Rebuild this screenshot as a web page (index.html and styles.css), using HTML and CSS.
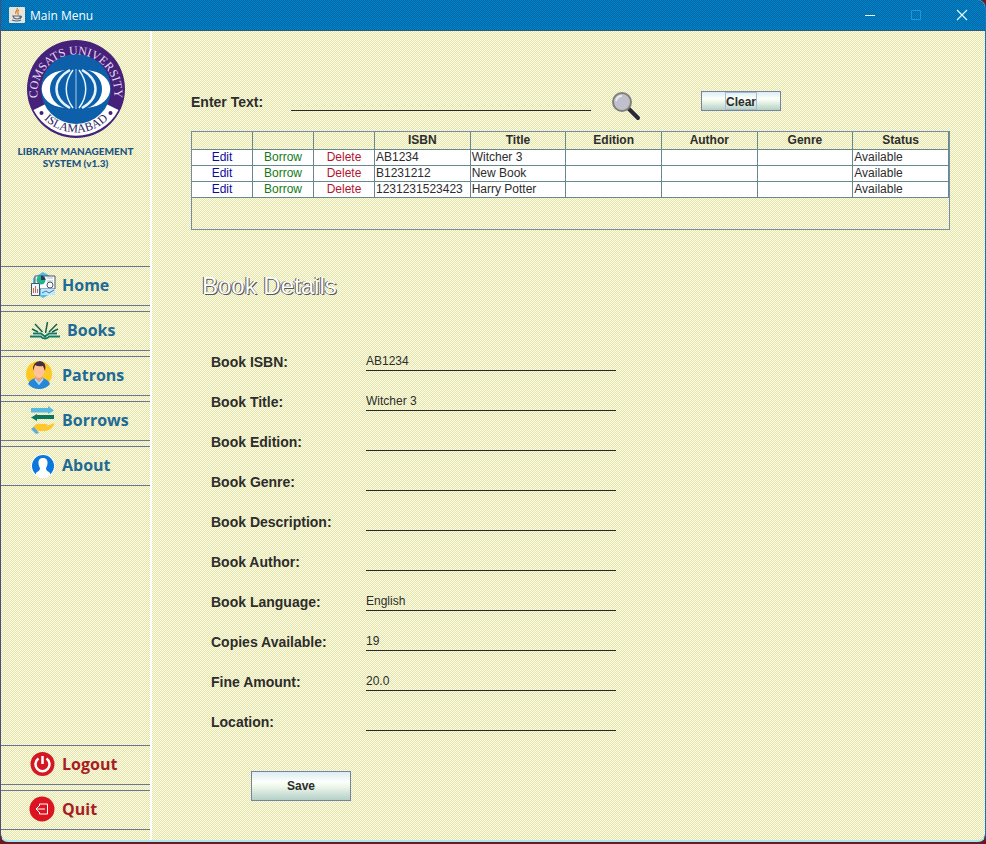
FILE: index.html
```html
<!DOCTYPE html>
<html lang="en">
<head>
<meta charset="utf-8">
<title>Main Menu</title>
<link rel="stylesheet" href="styles.css">
</head>
<body>
<div class="window">
  <header class="titlebar">
    <svg class="app-icon" viewBox="0 0 16 16" aria-hidden="true">
      <rect width="16" height="16" rx="1" fill="#e9e4d8"/>
      <path d="M8 1c2 2-3 3-1 6M10 3c-3 2 0 2-1 5" fill="none" stroke="#e07820" stroke-width="1.2"/>
      <path d="M4 9h7v2q-3 2-6 0zM11 9q3 0 0 2.500M3 13q5 2 9 0" fill="none" stroke="#4c6480" stroke-width="1.100"/>
    </svg>
    <span class="title">Main Menu</span>
    <div class="controls">
      <button class="control" type="button" aria-label="Minimize"><svg viewBox="0 0 12 12"><path d="M1 6.500h10" stroke="#e8ffff"/></svg></button>
      <button class="control" type="button" aria-label="Maximize" disabled><svg viewBox="0 0 12 12"><path d="M1.500 1.500h9v9h-9z" fill="none" stroke="#1a9ad6"/></svg></button>
      <button class="control" type="button" aria-label="Close"><svg viewBox="0 0 12 12"><path d="M1 1l10 10M11 1L1 11" stroke="#e8ffff" stroke-width="1.200"/></svg></button>
    </div>
  </header>

  <div class="content">
    <aside class="sidebar">
      <svg class="logo" viewBox="0 0 98 98" role="img" aria-label="COMSATS University Islamabad">
        <defs>
          <path id="ring-top" d="M15 71A38.500 38.500 0 1 1 83 71"/>
          <path id="ring-bottom" d="M8 66A45 45 0 0 0 90 66"/>
        </defs>
        <circle cx="49" cy="49" r="49" fill="#45217a"/>
        <path d="M6.500 70L49 49L91.500 70A48 48 0 0 1 6.500 70z" fill="#fff"/>
        <circle cx="49" cy="49" r="35" fill="#0c5fa8"/>
        <g fill="#fff">
          <path d="M38 30C7 33 7 65 38 68C18 62 18 36 38 30z"/>
          <path d="M60 30C91 33 91 65 60 68C80 62 80 36 60 30z"/>
        </g>
        <g fill="none" stroke="#e4f4ff">
          <path d="M43 30C25 40 25 58 43 68M55 30C73 40 73 58 55 68" stroke-width="2.500"/>
          <path d="M46 30C37 42 37 56 46 68M52 30C61 42 61 56 52 68" stroke-width="1.500"/>
          <path d="M49 29V69" stroke="#a8ccec"/>
        </g>
        <circle cx="14.500" cy="73" r="2" fill="#45217a"/>
        <circle cx="83.500" cy="73" r="2" fill="#45217a"/>
        <text class="ring-text"><textPath href="#ring-top" startOffset="50%" text-anchor="middle">COMSATS UNIVERSITY</textPath></text>
        <text class="ring-text ring-text-dark"><textPath href="#ring-bottom" startOffset="50%" text-anchor="middle">ISLAMABAD</textPath></text>
      </svg>
      <p class="brand">LIBRARY MANAGEMENT<br>SYSTEM (v1.3)</p>

      <nav class="menu">
        <button class="item" type="button">
          <svg class="icon" viewBox="0 0 32 28" aria-hidden="true">
            <path d="M14 1l11 6v14l-11 6-10-6V7z" fill="#55bce8"/>
            <path d="M6 5h20v13H6z" fill="#fff" stroke="#46566a"/>
            <circle cx="12" cy="9" r="4.500" fill="#22b58d"/><path d="M12 9V4.500A4.500 4.500 0 0 1 16.500 9z" fill="#303a60"/>
            <path d="M18 7h6M18 10h6" stroke="#aebdca"/>
            <path d="M2.500 12.500h8v12h-8z" fill="#eaf7ff" stroke="#46566a"/>
            <path d="M4.500 22v-5M6.500 22v-7M8.500 22v-4" stroke="#dc654c"/>
            <path d="M12 18h14v6H12z" fill="#bce8ff"/><circle cx="21" cy="14" r="3" fill="#fff" stroke="#46566a"/>
            <path d="M13 22l4-2 3 2 5-3" fill="none" stroke="#3978b8"/>
          </svg><span>Home</span>
        </button>
        <button class="item item-wide" type="button">
          <svg class="icon" viewBox="0 0 32 28" aria-hidden="true">
            <path d="M5 16h7l4 3 4-3h7l4 5H19l-3 2-3-2H1z" fill="#f8fff8"/>
            <path d="M1 20.500h11q1 2 4 2t4-2h11M4 17.500h8l4 3 4-3h8" fill="none" stroke="#147a60" stroke-width="1.800"/>
            <path d="M16.500 17l2-11M13.500 16L6 8M20 16l8-8M9 16l-6-3M23 16l6-3" stroke="#17604f" stroke-width="1.500"/>
          </svg><span>Books</span>
        </button>
        <button class="item" type="button">
          <svg class="icon icon-left" viewBox="0 0 28 30" aria-hidden="true">
            <circle cx="14" cy="14" r="13" fill="#ffc824"/>
            <path d="M3 24q2-5 8-6h6q6 1 8 6-4 5-11 5T3 24z" fill="#2686d9"/>
            <path d="M10 14h8v6l-4 4-4-4z" fill="#e6a17c"/><ellipse cx="14" cy="11" rx="5.500" ry="7" fill="#ffc39c"/>
            <path d="M8 11Q7 2 15 1q7 1 5 10l-2-5q-5 1-8-1z" fill="#443042"/>
            <path d="M10 19l4 5 4-5" fill="none" stroke="#a8dcff" stroke-width="1.500"/>
          </svg><span>Patrons</span>
        </button>
        <button class="item" type="button">
          <svg class="icon" viewBox="0 0 32 28" aria-hidden="true">
            <path d="M2 2h17V0l6 4.500L19 8V6.500H2z" fill="#58b8dd"/>
            <path d="M25 9H8V8l-6 3.500L8 15v-2h17z" fill="#08785f"/>
            <path d="M4 21q4-5 8-3h5q3 0 0 2l9-3q-3 7-10 8H9l-3 2z" fill="#ffc72c"/>
            <path d="M2 23l3-2 5 6-3 1z" fill="#56aede"/>
          </svg><span>Borrows</span>
        </button>
        <button class="item" type="button">
          <svg class="icon" viewBox="0 0 32 28" aria-hidden="true">
            <circle cx="14" cy="15" r="12" fill="#fff"/><circle cx="14" cy="15" r="11" fill="#0878dc"/>
            <path d="M14 7c-6 0-5 7-3 10 0 3-2 3-4 5v2q7 6 14 0v-2c-2-2-4-2-4-5 2-3 3-10-3-10z" fill="#fff"/>
          </svg><span>About</span>
        </button>
      </nav>

      <nav class="menu menu-bottom">
        <button class="item item-red" type="button">
          <svg class="icon" viewBox="0 0 32 28" aria-hidden="true">
            <circle cx="13.500" cy="14" r="12" fill="#d41822"/>
            <path d="M9.500 8.500a7 7 0 1 0 8 0" fill="none" stroke="#fff" stroke-width="2.500"/><path d="M13.500 6v8" stroke="#fff" stroke-width="2.500"/>
          </svg><span>Logout</span>
        </button>
        <button class="item item-red" type="button">
          <svg class="icon" viewBox="0 0 32 28" aria-hidden="true">
            <circle cx="13" cy="14" r="12.500" fill="#dc1422"/>
            <path d="M10.500 11V9h8v10h-8v-2M16 14H7M10 11l-3 3 3 3" fill="none" stroke="#fff"/>
          </svg><span>Quit</span>
        </button>
      </nav>
    </aside>

    <main class="main">
      <form class="search">
        <label class="search-label" for="query">Enter Text:</label>
        <input class="line-input search-input" id="query" type="text">
        <button class="search-button" type="button" aria-label="Search">
          <svg viewBox="0 0 30 30" aria-hidden="true">
            <path d="M18 18l9 9" stroke="#292938" stroke-width="4" stroke-linecap="round"/>
            <circle cx="11" cy="11" r="9" fill="#c0c0cc" stroke="#808078" stroke-width="2"/>
            <path d="M5 10q1-5 6-5" fill="none" stroke="#e8e8f0" stroke-width="2"/>
          </svg>
        </button>
        <button class="metal clear" type="button"><span>Clear</span></button>
      </form>

      <div class="table-pane">
        <table class="books">
          <colgroup><col class="act"><col class="act"><col class="act"><col><col><col><col><col><col></colgroup>
          <thead>
            <tr><th></th><th></th><th></th><th>ISBN</th><th>Title</th><th>Edition</th><th>Author</th><th>Genre</th><th>Status</th></tr>
          </thead>
          <tbody>
            <tr><td><a class="edit" href="#">Edit</a></td><td><a class="borrow" href="#">Borrow</a></td><td><a class="delete" href="#">Delete</a></td><td>AB1234</td><td>Witcher 3</td><td></td><td></td><td></td><td>Available</td></tr>
            <tr><td><a class="edit" href="#">Edit</a></td><td><a class="borrow" href="#">Borrow</a></td><td><a class="delete" href="#">Delete</a></td><td>B1231212</td><td>New Book</td><td></td><td></td><td></td><td>Available</td></tr>
            <tr><td><a class="edit" href="#">Edit</a></td><td><a class="borrow" href="#">Borrow</a></td><td><a class="delete" href="#">Delete</a></td><td>1231231523423</td><td>Harry Potter</td><td></td><td></td><td></td><td>Available</td></tr>
          </tbody>
        </table>
      </div>

      <h1 class="heading">Book Details</h1>

      <form class="details">
        <div class="field"><label for="isbn">Book ISBN:</label><input class="line-input" id="isbn" type="text" value="AB1234"></div>
        <div class="field"><label for="title">Book Title:</label><input class="line-input" id="title" type="text" value="Witcher 3"></div>
        <div class="field"><label for="edition">Book Edition:</label><input class="line-input" id="edition" type="text"></div>
        <div class="field"><label for="genre">Book Genre:</label><input class="line-input" id="genre" type="text"></div>
        <div class="field"><label for="description">Book Description:</label><input class="line-input" id="description" type="text"></div>
        <div class="field"><label for="author">Book Author:</label><input class="line-input" id="author" type="text"></div>
        <div class="field"><label for="language">Book Language:</label><input class="line-input" id="language" type="text" value="English"></div>
        <div class="field"><label for="copies">Copies Available:</label><input class="line-input" id="copies" type="text" value="19"></div>
        <div class="field"><label for="fine">Fine Amount:</label><input class="line-input" id="fine" type="text" value="20.0"></div>
        <div class="field"><label for="location">Location:</label><input class="line-input" id="location" type="text"></div>
        <button class="metal save" type="button">Save</button>
      </form>
    </main>
  </div>
</div>
</body>
</html>
```
FILE: styles.css
```css
* {
  box-sizing: border-box;
}

body {
  margin: 0;
  background: #6a1a20;
  color: #2c2c2c;
  font-family: "Liberation Sans", Arial, sans-serif;
  font-size: 12px;
}

button,
input {
  font: inherit;
  color: inherit;
}

button {
  padding: 0;
  border: 0;
  background: none;
}

/* One-pixel checker of two tones stands for the panel colour */
.window {
  display: flex;
  flex-direction: column;
  min-height: calc(100vh - 2px);
  border: 1px solid #4d4d78;
  border-top: 0;
  border-bottom: 2px solid #a8e8f4;
  border-right-color: #1674bc;
  border-radius: 0 8px 8px 8px;
  overflow: hidden;
  background: repeating-conic-gradient(#ffffdf 0 25%, #e2e2b2 0 50%) 0 0 / 2px 2px;
}

.titlebar {
  display: flex;
  align-items: center;
  height: 31px;
  padding-left: 8px;
  border-bottom: 1px solid #315a78;
  background: repeating-conic-gradient(#0084cc 0 25%, #0066a4 0 50%) 0 0 / 2px 2px;
  color: #fff;
}

.app-icon {
  width: 16px;
  height: 16px;
}

.title {
  margin-left: 5px;
  font-family: "Open Sans", "Noto Sans", sans-serif;
}

.controls {
  display: flex;
  margin-left: auto;
}

.control {
  display: flex;
  align-items: center;
  justify-content: center;
  width: 46px;
  height: 30px;
}

.control svg {
  width: 12px;
  height: 12px;
}

.content {
  display: flex;
  flex: 1;
}

.sidebar {
  display: flex;
  flex-direction: column;
  flex: none;
  width: 151px;
  padding: 9px 0 10px;
  border-right: 2px solid #fff;
}

.logo {
  align-self: center;
  width: 98px;
  height: 98px;
}

.ring-text {
  fill: #e6dcf6;
  font-family: "Liberation Serif", serif;
  font-size: 12px;
}

.ring-text-dark {
  fill: #2a2460;
}

.brand {
  margin: 7px 0 0;
  color: #1c5384;
  font-family: Lato, sans-serif;
  font-size: 10px;
  font-weight: 900;
  line-height: 12px;
  text-align: center;
}

.menu {
  display: flex;
  flex-direction: column;
  gap: 5px;
  margin-top: 97px;
}

.menu-bottom {
  margin-top: auto;
}

.item {
  display: flex;
  align-items: center;
  gap: 1px;
  height: 40px;
  padding: 0 0 3px 28px;
  border: solid #6a7590;
  border-width: 1px 0;
  color: #226a96;
  font-family: "Open Sans", "Noto Sans", sans-serif;
  font-size: 16px;
  font-weight: 700;
}

.item-wide {
  gap: 6px;
}

.item-red {
  color: #a81c24;
}

.icon {
  width: 32px;
  height: 28px;
}

.icon-left {
  width: 28px;
  height: 30px;
  margin: 0 8px 0 -4px;
}

.main {
  flex: 1;
  min-width: 0;
  padding: 60px 35px 39px 39px;
}

.search {
  display: flex;
  align-items: center;
  height: 20px;
}

.search-label {
  width: 100px;
  padding-top: 2px;
  font-size: 14px;
  font-weight: bold;
}

.line-input {
  width: 250px;
  height: 20px;
  padding: 0;
  border: 0;
  border-bottom: 1px solid #292929;
  border-radius: 0;
  outline: 0;
  background: none;
}

.search-input {
  width: 300px;
}

.search-button {
  width: 30px;
  height: 30px;
  margin: 10px 60px 0 20px;
}

.search-button svg {
  display: block;
}

.metal {
  border: 1px solid #7484a0;
  background: linear-gradient(#dcecf4, #fcfffa 35%, #f0f8ec 50%, #b4d0c8);
  font-weight: bold;
}

.clear {
  width: 80px;
  height: 20px;
}

.clear span {
  display: inline-block;
  height: 18px;
  border: 1px solid #a4bcd4;
  line-height: 18px;
}

.table-pane {
  height: 99px;
  margin-top: 20px;
  border: 1px solid #748ca4;
}

.books {
  width: 100%;
  border-collapse: separate;
  border-spacing: 0;
  table-layout: fixed;
}

.act {
  width: 61px;
}

.books th,
.books td {
  height: 16px;
  padding: 0 1px;
  overflow: hidden;
  border: solid #66888e;
  border-width: 0 1px 1px 0;
  line-height: 15px;
  text-align: left;
  white-space: nowrap;
}

.books td {
  background: #fff;
}

.books th {
  height: 18px;
  line-height: 17px;
  text-align: center;
}

.books a {
  display: block;
  text-align: center;
  text-decoration: none;
}

.edit {
  color: #0c0c9c;
}

.borrow {
  color: #147a14;
}

.delete {
  color: #b41430;
}

.heading {
  margin: 42px 0 0 11px;
  color: #fff;
  font-size: 24px;
  font-weight: normal;
  line-height: 28px;
  text-shadow: -1px 0 #55555c, 1px 1px #55555c;
}

.details {
  display: flex;
  flex-direction: column;
  align-items: flex-start;
  gap: 20px;
  margin: 51px 0 0 20px;
}

.field {
  display: flex;
}

.field label {
  width: 155px;
  padding-top: 2px;
  font-size: 14px;
  font-weight: bold;
  line-height: 18px;
}

.save {
  width: 100px;
  height: 30px;
  margin: 20px 0 0 40px;
}
```
